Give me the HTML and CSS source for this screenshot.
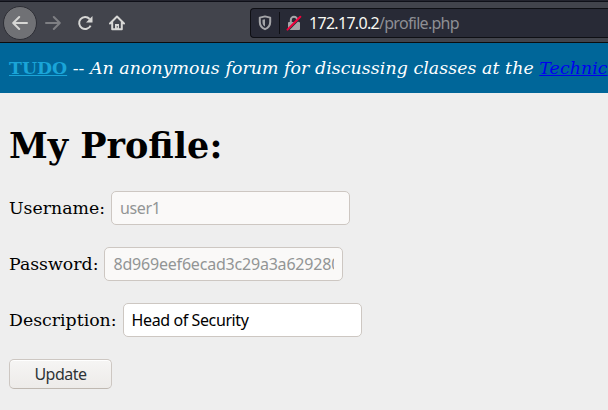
FILE: index.html
```html
<!DOCTYPE html>
<html lang="en">
<head>
<meta charset="utf-8">
<title>My Profile</title>
<link rel="stylesheet" href="styles.css">
</head>
<body>
<div class="toolbar">
  <span class="back"><svg width="16" height="16" viewBox="0 0 16 16"><path d="M15 8H1.5M7.2 2L1.2 8l6 6"/></svg></span>
  <svg class="forward" width="16" height="16" viewBox="0 0 16 16"><path d="M1 8h13.5M8.8 2l6 6-6 6"/></svg>
  <svg class="reload" width="16" height="16" viewBox="0 0 16 16"><path d="M13.6 10.6A6 6 0 1 1 12.6 4"/><path class="solid" d="M15.5 1v6.5H9z"/></svg>
  <svg class="home" width="16" height="16" viewBox="0 0 16 16"><path d="M1 8.5L8 1.5l7 7M3.2 7.5v6.8h9.6V7.5"/><path class="solid" d="M6 15V9h4v6z"/><path class="door" d="M8.3 11.2v1.3"/></svg>
  <div class="urlbar">
    <svg class="shield" width="14" height="16" viewBox="0 0 14 16"><path d="M7 1.4L12.2 2.6V7c0 3.5-1.7 5.7-5.2 7.2C3.5 12.7 1.8 10.5 1.8 7V2.6z"/><path class="solid" d="M7 4.2v7.4C5.2 10.5 4.5 9 4.5 7V4.7z"/></svg>
    <span class="divider"></span>
    <svg class="lock" width="16" height="16" viewBox="0 0 16 16"><path d="M4.8 8V5a3.2 3.2 0 0 1 6.4 0v3"/><rect class="solid" x="2" y="7" width="12" height="8" rx="1"/><path class="gap" d="M2 15.5L15.5 2"/><path class="slash" d="M1.5 14.6L14.3 1.8"/></svg>
    <span class="url">172.17.0.2<span class="path">/profile.php</span></span>
  </div>
</div>
<header class="banner"><a class="brand" href="#">TUDO</a> -- <i>An anonymous forum for discussing classes at the <a href="#">Technic</a></i></header>
<main>
  <h1>My Profile:</h1>
  <form>
    <div class="row"><label for="u">Username:</label><input id="u" value="user1" disabled></div>
    <div class="row"><label for="p">Password:</label><input id="p" class="hash" value="8d969eef6ecad3c29a3a629280e686cf" disabled></div>
    <div class="row"><label for="d">Description:</label><input id="d" value="Head of Security"></div>
    <button type="button">Update</button>
  </form>
</main>
</body>
</html>
```
FILE: styles.css
```css
* { box-sizing: border-box; }
body {
  margin: 0;
  height: 410px;
  overflow: hidden;
  background: #eeeeee;
  color: #000;
  font: 17.33px/22px "DejaVu Serif", serif;
}
.toolbar {
  display: flex;
  align-items: center;
  height: 43px;
  padding: 2px 0 0 3px;
  background: #42444c;
  border-top: 1px solid #23242e;
  border-bottom: 1px solid #0c0c0d;
  box-shadow: inset 0 1px #0f1018;
}
svg { flex: none; fill: none; stroke: #d7d7d5; stroke-width: 2; stroke-linecap: round; stroke-linejoin: round; }
.solid { fill: #d7d7d5; stroke: none; }
.back {
  display: flex;
  align-items: center;
  justify-content: center;
  flex: none;
  width: 34px;
  height: 34px;
  border: 1px solid #2d2e35;
  border-radius: 50%;
  background: #707175;
}
.forward { margin-left: 8px; stroke: #7e7f83; }
.reload { margin-left: 16px; stroke-linecap: butt; }
.home { margin-left: 16px; }
.door { stroke: #42444c; stroke-width: 1.2; stroke-linecap: butt; }
.urlbar {
  display: flex;
  align-items: center;
  flex: 1;
  height: 30px;
  margin-left: 125px;
  padding-left: 7px;
  border: 1px solid #0e0f14;
  border-right: 0;
  border-radius: 4px 0 0 4px;
  background: #282a36;
}
.urlbar svg { stroke: #a4a5a8; }
.urlbar .solid { fill: #a4a5a8; }
.divider { width: 1px; height: 22px; margin: 0 6px 0 7px; background: #0e0f14; }
.urlbar .gap { stroke: #282a36; stroke-width: 1.5; }
.urlbar .slash { stroke: #f0003c; stroke-width: 2; }
.url { margin-left: 7px; color: #f8f8f2; font: 16px/22px "Noto Sans", sans-serif; letter-spacing: -0.7px; }
.path { color: #8e8f94; }
.banner {
  height: 50px;
  padding: 14px 0 0 9px;
  background: #006699;
  color: #fff;
  white-space: nowrap;
  overflow: hidden;
}
.banner i { letter-spacing: 0.08px; }
.banner a { color: #0000ee; }
.banner .brand { color: #1aa5d8; font-weight: bold; }
main { padding: 32px 9px 0; }
h1 { margin: 0 0 24px; font-size: 35px; line-height: 42px; }
.row { display: flex; align-items: center; gap: 6px; height: 34px; margin-bottom: 22px; }
input {
  width: 239px;
  height: 34px;
  padding: 0 8px;
  border: 1px solid #cdc7c2;
  border-radius: 5px;
  background: #fff;
  color: #000;
  font: 16px "Noto Sans", sans-serif;
  letter-spacing: -0.4px;
}
input:disabled { background: #faf9f8; color: #929595; }
input.hash { letter-spacing: -0.2px; }
button {
  display: block;
  width: 103px;
  height: 30px;
  padding: 0;
  border: 1px solid #cdc7c2;
  border-bottom-color: #bfb8b1;
  border-radius: 5px;
  background: linear-gradient(#f6f5f4, #edebe9);
  box-shadow: inset 0 1px #fff;
  color: #2e3436;
  font: 16px "Noto Sans", sans-serif;
  letter-spacing: -0.5px;
}
```
